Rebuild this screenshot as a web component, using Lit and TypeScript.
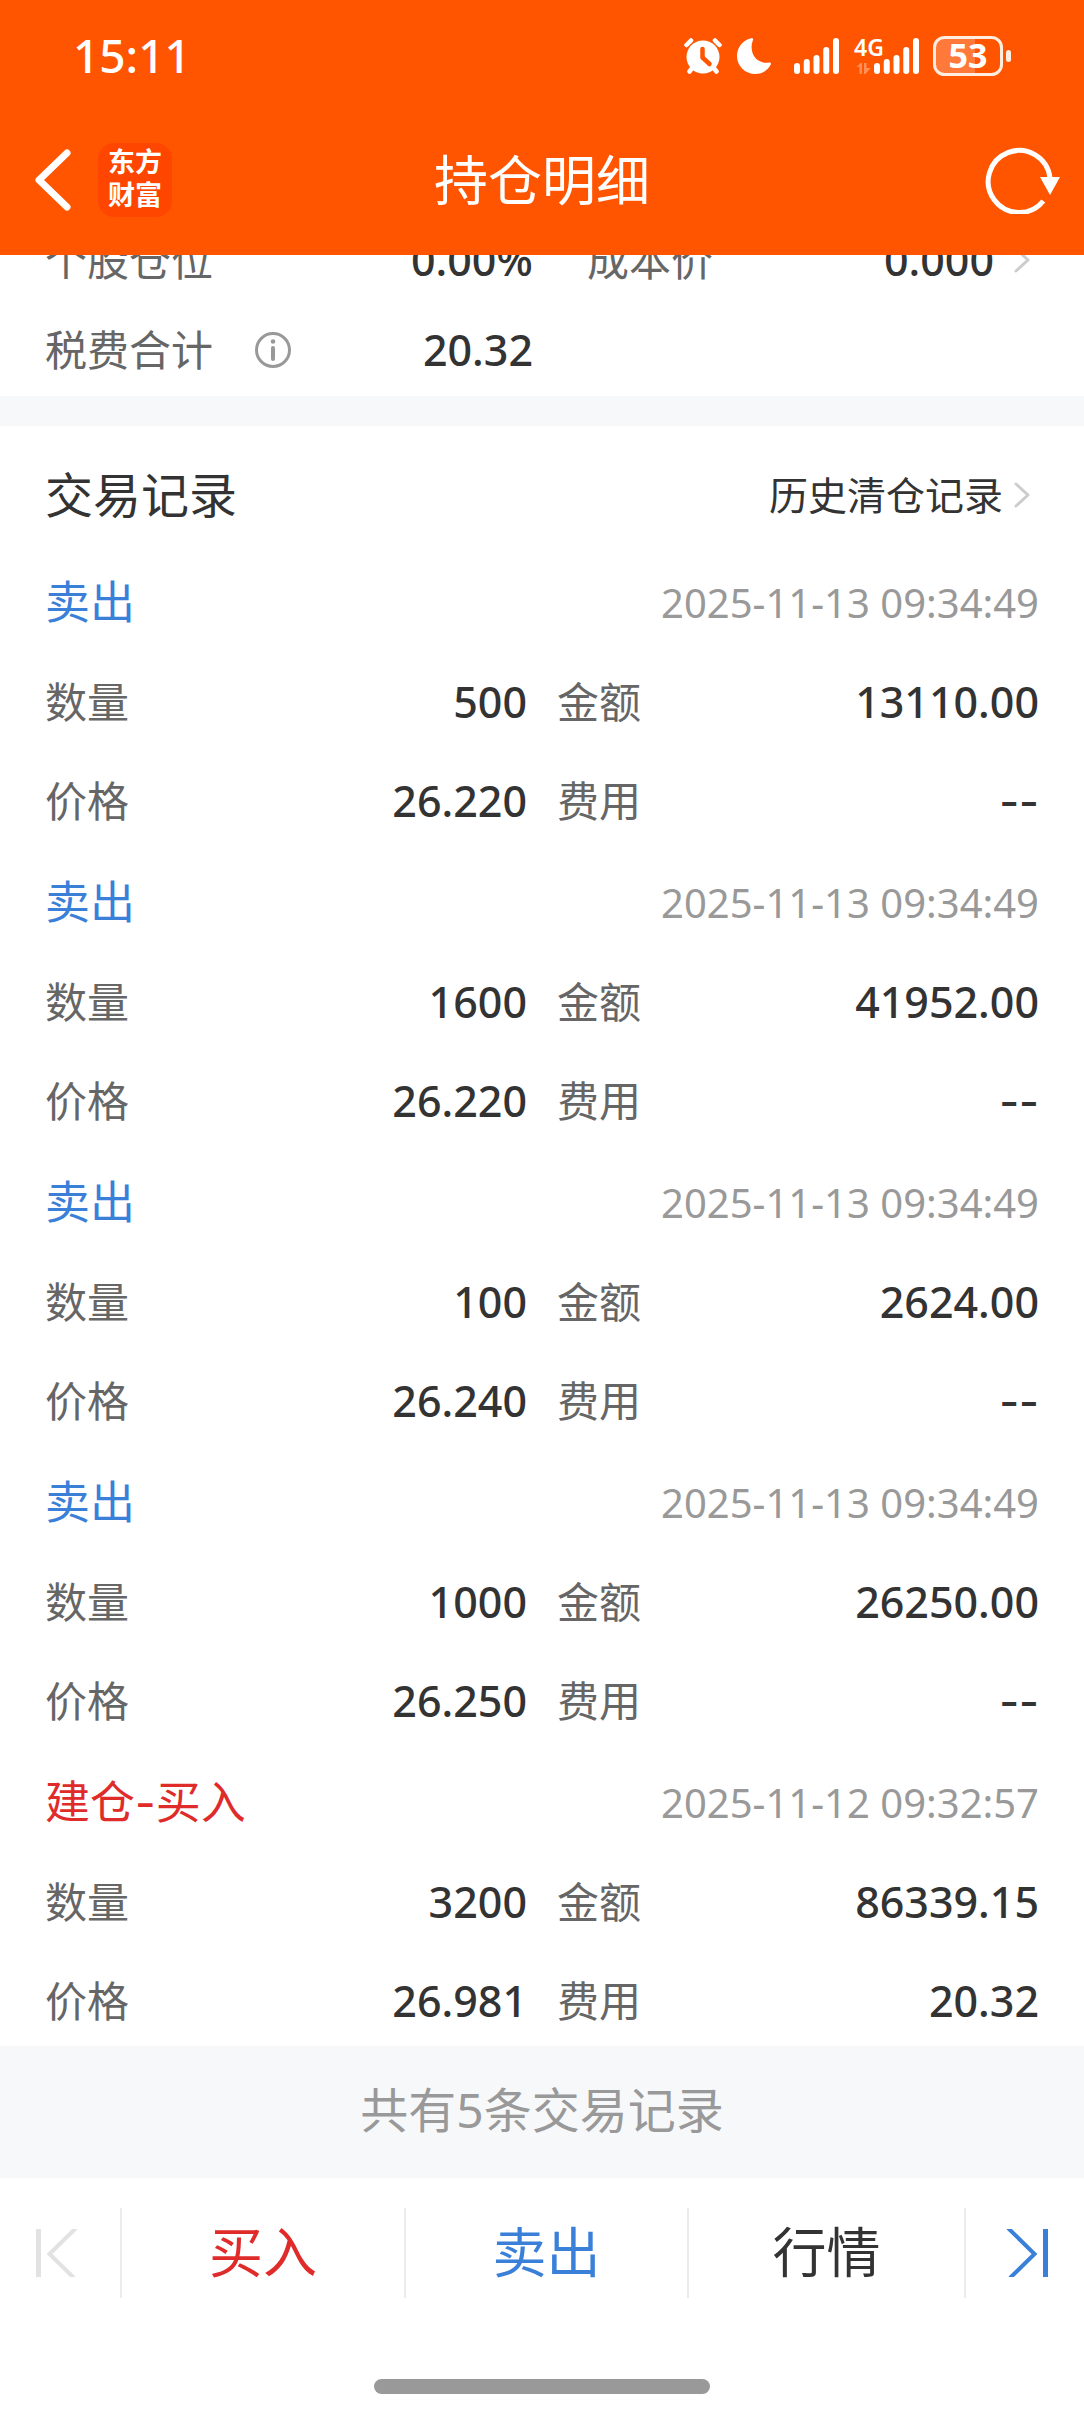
import { LitElement, html, svg, css } from "lit";
import { customElement } from "lit/decorators.js";
import { classMap } from "lit/directives/class-map.js";

interface TradeRecord {
  title: string;
  side: "sell" | "buy";
  time: string;
  quantity: string;
  amount: string;
  price: string;
  fee: string;
}

const RECORDS: TradeRecord[] = [
  { title: "卖出", side: "sell", time: "2025-11-13 09:34:49", quantity: "500", amount: "13110.00", price: "26.220", fee: "--" },
  { title: "卖出", side: "sell", time: "2025-11-13 09:34:49", quantity: "1600", amount: "41952.00", price: "26.220", fee: "--" },
  { title: "卖出", side: "sell", time: "2025-11-13 09:34:49", quantity: "100", amount: "2624.00", price: "26.240", fee: "--" },
  { title: "卖出", side: "sell", time: "2025-11-13 09:34:49", quantity: "1000", amount: "26250.00", price: "26.250", fee: "--" },
  { title: "建仓-买入", side: "buy", time: "2025-11-12 09:32:57", quantity: "3200", amount: "86339.15", price: "26.981", fee: "20.32" },
];

const BAR_TOPS = [25, 21, 17, 9, 0];

const signalBars = () => html`
  <svg width="45" height="36" viewBox="0 0 45 36" aria-hidden="true">
    ${BAR_TOPS.map(
      (top, i) => svg`<rect x=${i * 9.75} y=${top} width="6" height=${36 - top} rx="3" fill="#fff"></rect>`,
    )}
  </svg>
`;

const chevron = () => html`
  <svg class="chevron" width="16" height="26" viewBox="0 0 16 26" aria-hidden="true">
    <path d="M2 2 L14 13 L2 24" fill="none" stroke="#cccccc" stroke-width="3" stroke-linecap="round" stroke-linejoin="round"></path>
  </svg>
`;

@customElement("status-bar")
export class StatusBar extends LitElement {
  static styles = css`
    :host {
      display: flex;
      align-items: center;
      justify-content: space-between;
      height: 112px;
      padding: 0 73px;
      color: #fff;
      font-family: "Noto Sans", "Noto Sans CJK SC", sans-serif;
    }
    .time {
      padding-bottom: 3px;
      font-size: 46px;
      line-height: 60px;
      font-weight: 500;
    }
    .icons {
      display: flex;
      align-items: center;
    }
    svg {
      display: block;
    }
    .moon {
      margin: 0 22px 0 15px;
    }
    .mobile {
      position: relative;
      margin: 0 14px 0 15px;
      padding-left: 20px;
    }
    .net {
      position: absolute;
      left: 0;
      top: 0;
      font-size: 23px;
      line-height: 18px;
      font-weight: 600;
    }
    .arrows {
      position: absolute;
      left: 2px;
      bottom: 0;
    }
    .battery {
      position: relative;
      width: 78px;
      height: 40px;
    }
    .level {
      position: absolute;
      inset: 0 8px 0 0;
      font-size: 34px;
      line-height: 38px;
      font-weight: 700;
      text-align: center;
    }
  `;

  render() {
    return html`
      <span class="time">15:11</span>
      <div class="icons">
        <svg width="38" height="36" viewBox="0 0 38 36" aria-hidden="true">
          <g stroke="#fff" stroke-width="4.500" stroke-linecap="round" fill="none">
            <path d="M2.5 7 L7 2.500"></path>
            <path d="M31 2.500 L35.500 7"></path>
            <path d="M9 29 L5.500 33.500"></path>
            <path d="M29 29 L32.500 33.500"></path>
          </g>
          <circle cx="19" cy="19" r="16.500" fill="#fff"></circle>
          <path d="M18.500 11 V19.500 L25.500 26" fill="none" stroke="#ff5500" stroke-width="4.500" stroke-linecap="round" stroke-linejoin="round"></path>
        </svg>
        <svg class="moon" width="35" height="36" viewBox="0 0 35 36" aria-hidden="true">
          <path d="M14 0.300 Q17 -0.500 15.800 2.500 C12 12 17 26.500 32 24.500 Q35 24.300 33.500 27 C30 33 25 36 18.500 36 C8 36 0 28 0 18 C0 9.500 5.500 2.500 14 0.300 Z" fill="#fff"></path>
        </svg>
        ${signalBars()}
        <div class="mobile">
          <span class="net">4G</span>
          <svg class="arrows" width="15" height="11" viewBox="0 0 15 11" aria-hidden="true">
            <path d="M0.500 4 L4.500 0 H6 V11 H3.500 V4 Z M8 0 H10.500 V5 H14.500 L9.500 11 H8 Z" fill="#fff" opacity="0.350"></path>
          </svg>
          ${signalBars()}
        </div>
        <div class="battery">
          <svg width="78" height="40" viewBox="0 0 78 40" aria-hidden="true">
            <path d="M12 1.500 H42 V38.500 H12 A10 10 0 0 1 2 28.500 V11.500 A10 10 0 0 1 12 1.500 Z" fill="#ff7a3a"></path>
            <rect x="1.500" y="1.500" width="67" height="37" rx="10" fill="none" stroke="#ffeee0" stroke-width="3"></rect>
            <rect x="73" y="14" width="5" height="12" rx="2.500" fill="#ffeee0"></rect>
          </svg>
          <span class="level">53</span>
        </div>
      </div>
    `;
  }
}

@customElement("trade-record")
export class TradeRecordItem extends LitElement {
  static properties = { record: { attribute: false } };

  declare record: TradeRecord;

  static styles = css`
    :host {
      display: flex;
      flex-direction: column;
      gap: 9px;
      font-family: "Noto Sans", "Noto Sans CJK SC", sans-serif;
    }
    .row {
      display: flex;
      align-items: center;
      justify-content: space-between;
      height: 90px;
    }
    .title {
      margin: 0;
      font-family: Inter, "Noto Sans CJK SC", sans-serif;
      font-size: 45px;
      line-height: 60px;
      font-weight: 400;
    }
    .sell {
      color: #3a80d9;
    }
    .buy {
      color: #e02b2b;
    }
    .time {
      color: #999;
      font-size: 40px;
      line-height: 60px;
    }
    .pairs {
      display: grid;
      grid-template-columns: 1fr 1fr;
      gap: 9px 30px;
      margin: 0;
    }
    dt {
      color: #666;
      font-size: 42px;
      line-height: 60px;
    }
    dd {
      margin: 0;
      color: #333;
      font-size: 43px;
      line-height: 60px;
      font-weight: 500;
    }
    .none {
      font-family: Inter, sans-serif;
    }
  `;

  private pair(label: string, value: string) {
    return html`
      <div class="row">
        <dt>${label}</dt>
        <dd class=${classMap({ none: value === "--" })}>${value}</dd>
      </div>
    `;
  }

  render() {
    const r = this.record;
    return html`
      <div class="row">
        <h3 class=${classMap({ title: true, [r.side]: true })}>${r.title}</h3>
        <time class="time">${r.time}</time>
      </div>
      <dl class="pairs">
        ${this.pair("数量", r.quantity)} ${this.pair("金额", r.amount)}
        ${this.pair("价格", r.price)} ${this.pair("费用", r.fee)}
      </dl>
    `;
  }
}

@customElement("app-root")
export class AppRoot extends LitElement {
  static styles = css`
    :host {
      display: flex;
      flex-direction: column;
      min-height: 100vh;
      background: #fff;
      color: #333;
      font-family: "Noto Sans", "Noto Sans CJK SC", sans-serif;
    }
    svg {
      display: block;
    }
    button {
      margin: 0;
      padding: 0;
      border: 0;
      background: none;
      color: inherit;
      font: inherit;
    }
    .header {
      position: sticky;
      top: 0;
      z-index: 1;
      background: #ff5500;
      color: #fff;
    }
    .navbar {
      display: grid;
      grid-template-columns: 1fr auto 1fr;
      align-items: center;
      height: 135px;
      padding: 0 23px 8px;
    }
    .lead {
      display: flex;
      align-items: center;
      gap: 27px;
      padding-left: 11px;
    }
    .logo {
      display: flex;
      flex-direction: column;
      justify-content: center;
      width: 74px;
      height: 74px;
      border-radius: 16px;
      background: #ff4600;
      font-family: "Liberation Sans", "Noto Sans CJK SC", sans-serif;
      font-size: 27px;
      line-height: 33px;
      font-weight: 700;
      text-align: center;
    }
    .page-title {
      margin: 0;
      font-size: 54px;
      line-height: 72px;
      font-weight: 400;
    }
    .refresh {
      justify-self: end;
    }
    .content {
      flex: 1;
    }
    .summary {
      display: grid;
      grid-template-columns: 488fr 443fr;
      column-gap: 54px;
      margin: -40px 0 0;
      padding: 0 54px 1px 45px;
    }
    .cell {
      display: flex;
      align-items: center;
      height: 90px;
    }
    dt {
      color: #666;
      font-size: 42px;
      line-height: 60px;
    }
    dd {
      margin: 0 0 0 auto;
      font-size: 43px;
      line-height: 60px;
      font-weight: 500;
    }
    .info {
      margin-left: 42px;
    }
    .more {
      margin-left: 20px;
    }
    .divider {
      height: 30px;
      background: #f7f8fa;
    }
    .section-head {
      box-sizing: border-box;
      display: flex;
      align-items: center;
      justify-content: space-between;
      height: 132px;
      padding: 6px 54px 0 45px;
    }
    .section-title {
      margin: 0;
      font-size: 48px;
      line-height: 72px;
      font-weight: 400;
    }
    .history {
      display: flex;
      align-items: center;
      gap: 11px;
      color: inherit;
      font-size: 39px;
      line-height: 60px;
      text-decoration: none;
    }
    .records {
      display: flex;
      flex-direction: column;
      gap: 12px;
      padding: 0 45px;
    }
    .total {
      margin: 0;
      padding: 28px 0 32px;
      background: #f7f8fa;
      color: #999;
      font-size: 48px;
      line-height: 72px;
      text-align: center;
    }
    .actions {
      display: grid;
      grid-template-columns: 122px 284fr 283fr 277fr 118px;
      align-items: center;
      height: 150px;
    }
    .action {
      box-sizing: border-box;
      display: flex;
      align-items: center;
      justify-content: center;
      height: 90px;
      padding-bottom: 3px;
      border-right: 2px solid #ececec;
      font-size: 54px;
      line-height: 72px;
      font-weight: 400;
    }
    .edge {
      justify-content: flex-start;
      padding: 0 0 0 36px;
    }
    .last {
      justify-content: flex-end;
      padding: 0 36px 0 0;
      border-right: 0;
    }
    .sell {
      color: #3a80d9;
    }
    .buy {
      color: #e02b2b;
    }
    .home {
      display: flex;
      justify-content: center;
      padding: 51px 0 18px;
    }
    .home-pill {
      width: 31%;
      height: 15px;
      border-radius: 8px;
      background: #999;
    }
  `;

  render() {
    return html`
      <header class="header">
        <status-bar></status-bar>
        <div class="navbar">
          <div class="lead">
            <button aria-label="返回">
              <svg width="37" height="62" viewBox="0 0 37 62" aria-hidden="true">
                <path d="M33 4 L5 31 L33 58" fill="none" stroke="#fff" stroke-width="7" stroke-linecap="round" stroke-linejoin="round"></path>
              </svg>
            </button>
            <div class="logo"><span>东方</span><span>财富</span></div>
          </div>
          <h1 class="page-title">持仓明细</h1>
          <button class="refresh" aria-label="刷新">
            <svg width="76" height="68" viewBox="0 0 76 68" aria-hidden="true">
              <path d="M58.300 55 A31 31 0 1 1 65 32" fill="none" stroke="#fff" stroke-width="5"></path>
              <path d="M55 31 H75 L65 49 Z" fill="#fff"></path>
            </svg>
          </button>
        </div>
      </header>

      <main class="content">
        <dl class="summary">
          <div class="cell"><dt>个股仓位</dt><dd>0.00%</dd></div>
          <div class="cell"><dt>成本价</dt><dd>0.000</dd><span class="more">${chevron()}</span></div>
          <div class="cell">
            <dt>税费合计</dt>
            <button class="info" aria-label="说明">
              <svg width="36" height="36" viewBox="0 0 36 36" aria-hidden="true">
                <circle cx="18" cy="18" r="16.500" fill="none" stroke="#999" stroke-width="3"></circle>
                <circle cx="18" cy="9.500" r="2.300" fill="#999"></circle>
                <path d="M18 16 V27" stroke="#999" stroke-width="4" stroke-linecap="round"></path>
              </svg>
            </button>
            <dd>20.32</dd>
          </div>
        </dl>
        <div class="divider"></div>
        <section>
          <div class="section-head">
            <h2 class="section-title">交易记录</h2>
            <a class="history" href="#history">历史清仓记录 ${chevron()}</a>
          </div>
          <div class="records">
            ${RECORDS.map((r) => html`<trade-record .record=${r}></trade-record>`)}
          </div>
        </section>
        <p class="total">共有5条交易记录</p>
      </main>

      <nav class="actions">
        <button class="action edge" aria-label="上一个" disabled>
          <svg width="42" height="48" viewBox="0 0 42 48" aria-hidden="true">
            <path d="M2.500 0 V48" stroke="#e2e2e2" stroke-width="5"></path>
            <path d="M40 -1 L13.500 25 L38 49" fill="none" stroke="#e2e2e2" stroke-width="4"></path>
          </svg>
        </button>
        <button class="action buy">买入</button>
        <button class="action sell">卖出</button>
        <button class="action">行情</button>
        <button class="action last" aria-label="下一个">
          <svg width="42" height="48" viewBox="0 0 42 48" aria-hidden="true">
            <path d="M39.500 0 V48" stroke="#3a80d9" stroke-width="5"></path>
            <path d="M2 -1 L28.500 25 L4 49" fill="none" stroke="#3a80d9" stroke-width="4"></path>
          </svg>
        </button>
      </nav>
      <div class="home"><div class="home-pill"></div></div>
    `;
  }
}
